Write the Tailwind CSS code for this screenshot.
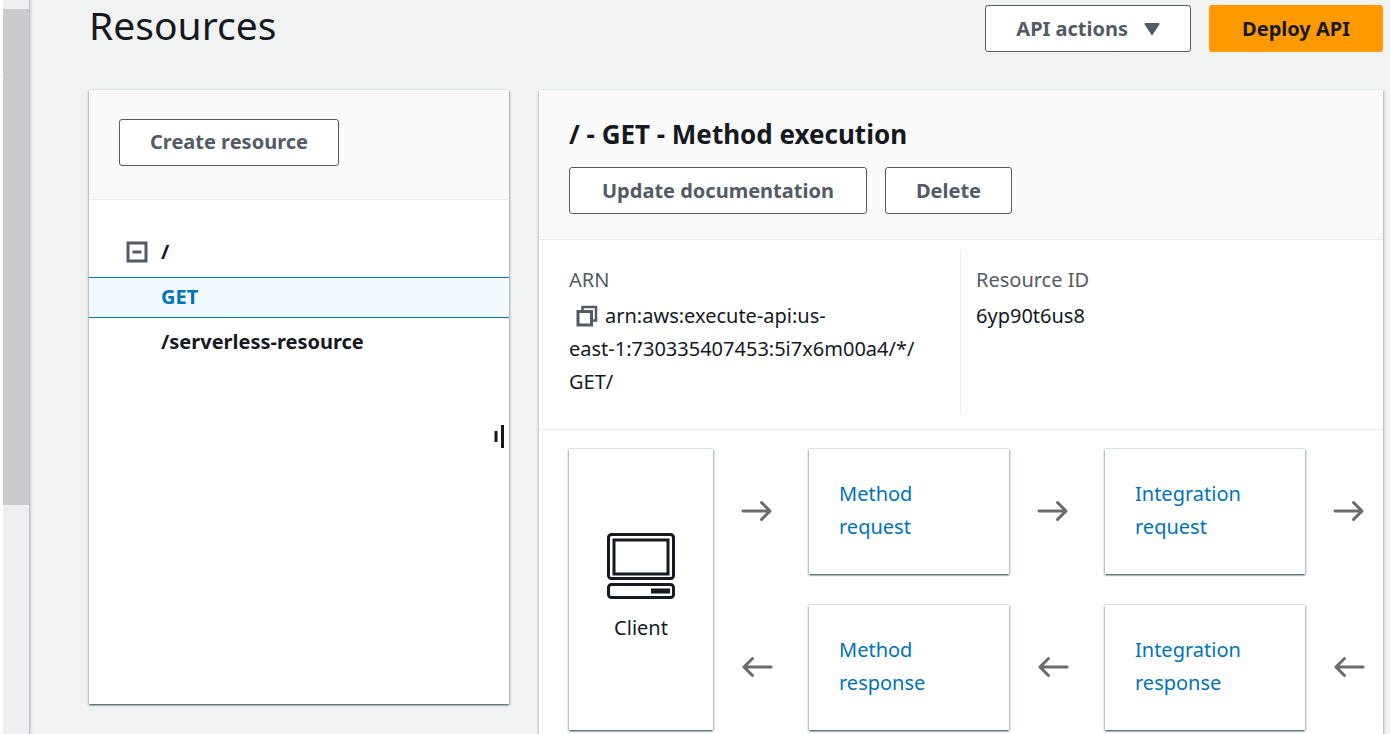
<!DOCTYPE html>
<html lang="en">
<head>
<meta charset="utf-8">
<title>Resources</title>
<script src="https://cdn.jsdelivr.net/npm/@tailwindcss/browser@4"></script>
</head>
<body class="flex h-screen overflow-hidden bg-[#f1f3f3] font-['Noto_Sans',sans-serif] text-xl text-[#16191f]">
<svg class="hidden">
  <symbol id="arrow" viewBox="0 0 32 22"><path d="M2 11h27M20.500 2.500l8.500 8.500-8.500 8.500" fill="none" stroke="#6b6b70" stroke-width="3" stroke-linecap="round" stroke-linejoin="round"/></symbol>
</svg>
<aside class="flex shrink-0 border-r border-[#bcc4c9] shadow-[1px_0_2px_#c5cdd2]">
  <div class="w-[3px] bg-white pt-[76px]"><div class="h-px bg-[#eaeded]"></div></div>
  <div class="w-[26px] bg-[#efefef] pt-[9px]"><div class="h-[496px] bg-[#cbcbcb]"></div></div>
</aside>
<main class="min-w-0 flex-1 pr-[7px] pl-[59px]">
  <header class="flex h-[90px] items-start justify-between">
    <h1 class="text-[39px] leading-[50px]">Resources</h1>
    <div class="flex gap-[18px] pt-[5px]">
      <button class="flex h-[47px] items-center gap-4 rounded-[3px] border border-[#545b64] bg-white px-[30px] font-bold text-[#545b64]">API actions
        <svg class="h-3 w-4" viewBox="0 0 16 12"><path d="M1.500 1h13L8 11z" fill="#545b64" stroke="#545b64" stroke-width="2" stroke-linejoin="round"/></svg>
      </button>
      <button class="h-[47px] rounded-[3px] bg-[#ff9900] px-[33px] font-bold">Deploy API</button>
    </div>
  </header>
  <div class="flex items-start gap-[30px]">
    <section class="relative h-[614px] w-[420px] shrink-0 bg-white shadow-[0_2px_1px_-1px_#64777c,0_1px_2px_#879596,1px_1px_2px_#b9c2c5,-1px_1px_2px_#c5cdd0,0_-1px_0_#e8ebeb]">
      <div class="border-b border-[#eaeded] bg-[#fafafa] px-[30px] pt-[29px] pb-[33px]">
        <button class="h-[47px] rounded-[3px] border border-[#545b64] bg-white px-[30px] pb-[2px] font-bold text-[#545b64]">Create resource</button>
      </div>
      <ul class="pt-[32px] font-bold">
        <li class="flex h-[45px] items-center gap-[13px] pb-[10px] pl-[37px] leading-10">
          <button aria-label="Collapse" class="mt-1"><svg class="size-[22px]" viewBox="0 0 22 22"><path d="M2 2h18v18H2zM6.500 11h9" fill="none" stroke="#545b64" stroke-width="3"/></svg></button><span class="pt-1">/</span>
        </li>
        <li class="border-y border-[#0073bb] bg-[#f1faff] pb-[2px] pl-[72px] leading-[37px] text-[#0073bb]"><a href="#get">GET</a></li>
        <li class="pt-1 pl-[72px] leading-10"><a href="#serverless">/serverless-resource</a></li>
      </ul>
      <button aria-label="Resize panel" class="absolute top-[335px] right-[4px]"><svg class="h-[23px] w-[11px]" viewBox="0 0 11 23"><path d="M2 6v11M8.500 0v23" stroke="#16191f" stroke-width="3"/></svg></button>
    </section>
    <section class="min-w-0 flex-1 bg-white shadow-[1px_1px_2px_#a5b1b4,-1px_1px_2px_#b9c2c5,0_-1px_0_#e8ebeb]">
      <div class="border-b border-[#eaeded] bg-[#fafafa] px-[30px] pt-[28px] pb-[25px]">
        <h2 class="text-[26px] leading-[33px] font-bold">/ - GET - Method execution</h2>
        <div class="mt-4 flex gap-[18px]">
          <button class="h-[47px] rounded-[3px] border border-[#545b64] bg-white px-8 font-bold text-[#545b64]">Update documentation</button>
          <button class="h-[47px] rounded-[3px] border border-[#545b64] bg-white px-[30px] font-bold text-[#545b64]">Delete</button>
        </div>
      </div>
      <dl class="grid grid-cols-[minmax(0,1fr)_minmax(0,1fr)] border-b border-[#eaeded] pt-[10px] pr-[2px] pb-[15px] leading-[33px]">
        <div class="min-h-[164px] pt-[13px] pl-[30px]">
          <dt class="text-[#545b64]">ARN</dt>
          <dd class="mt-[3px]"><button aria-label="Copy ARN" class="mx-[7px] -mt-1 align-middle"><svg class="size-[22px]" viewBox="0 0 22 22" fill="none" stroke="#545b64" stroke-width="3"><path d="M2 6.500h13.500V20H2z"/><path d="M6.500 6V2H20v13.500h-4" stroke-width="2.500"/></svg></button>arn:aws:execute-api:us-<br>east-1:730335407453:5i7x6m00a4/*/<br>GET/</dd>
        </div>
        <div class="border-l border-[#eaeded] pt-[13px] pl-[15px]">
          <dt class="text-[#545b64]">Resource ID</dt>
          <dd class="mt-[3px]">6yp90t6us8</dd>
        </div>
      </dl>
      <div class="flex gap-[30px] overflow-hidden px-[30px] pt-[19px] pb-[30px] leading-[33px]">
        <div class="flex w-[144px] shrink-0 flex-col items-center justify-center bg-white pb-1 shadow-[0_2px_1px_-1px_#64777c,0_1px_2px_#879596,1px_1px_2px_#b9c2c5,-1px_1px_2px_#c5cdd0,0_-1px_0_#e8ebeb]">
          <svg class="h-[68px] w-[70px]" viewBox="0 0 70 68" fill="none" stroke="#16191f" stroke-width="3"><rect x="2.500" y="2.500" width="65" height="44" rx="3"/><rect x="8" y="8" width="54" height="34"/><rect x="2.500" y="52.500" width="65" height="13" rx="3"/><path d="M45 59h19" stroke-width="5" stroke-linecap="butt"/></svg>
          <span class="mt-[11px]">Client</span>
        </div>
        <div class="grid auto-rows-[125px] grid-cols-[36px_200px_36px_200px_36px] gap-x-[30px] gap-y-[31px] text-[#0073bb]">
          <svg class="mt-[51px] ml-[-2px] h-[22px] w-8"><use href="#arrow"/></svg>
          <a href="#method-request" class="bg-white py-[28px] pr-[60px] pl-[30px] shadow-[0_2px_1px_-1px_#64777c,0_1px_2px_#879596,1px_1px_2px_#b9c2c5,-1px_1px_2px_#c5cdd0,0_-1px_0_#e8ebeb]">Method request</a>
          <svg class="mt-[51px] ml-[-2px] h-[22px] w-8"><use href="#arrow"/></svg>
          <a href="#integration-request" class="bg-white py-[28px] pr-[60px] pl-[30px] shadow-[0_2px_1px_-1px_#64777c,0_1px_2px_#879596,1px_1px_2px_#b9c2c5,-1px_1px_2px_#c5cdd0,0_-1px_0_#e8ebeb]">Integration request</a>
          <svg class="mt-[51px] ml-[-2px] h-[22px] w-8"><use href="#arrow"/></svg>
          <svg class="mt-[51px] ml-[-2px] h-[22px] w-8 rotate-180"><use href="#arrow"/></svg>
          <a href="#method-response" class="bg-white py-[28px] pr-[60px] pl-[30px] shadow-[0_2px_1px_-1px_#64777c,0_1px_2px_#879596,1px_1px_2px_#b9c2c5,-1px_1px_2px_#c5cdd0,0_-1px_0_#e8ebeb]">Method response</a>
          <svg class="mt-[51px] ml-[-2px] h-[22px] w-8 rotate-180"><use href="#arrow"/></svg>
          <a href="#integration-response" class="bg-white py-[28px] pr-[60px] pl-[30px] shadow-[0_2px_1px_-1px_#64777c,0_1px_2px_#879596,1px_1px_2px_#b9c2c5,-1px_1px_2px_#c5cdd0,0_-1px_0_#e8ebeb]">Integration response</a>
          <svg class="mt-[51px] ml-[-2px] h-[22px] w-8 rotate-180"><use href="#arrow"/></svg>
        </div>
      </div>
    </section>
  </div>
</main>
</body>
</html>
